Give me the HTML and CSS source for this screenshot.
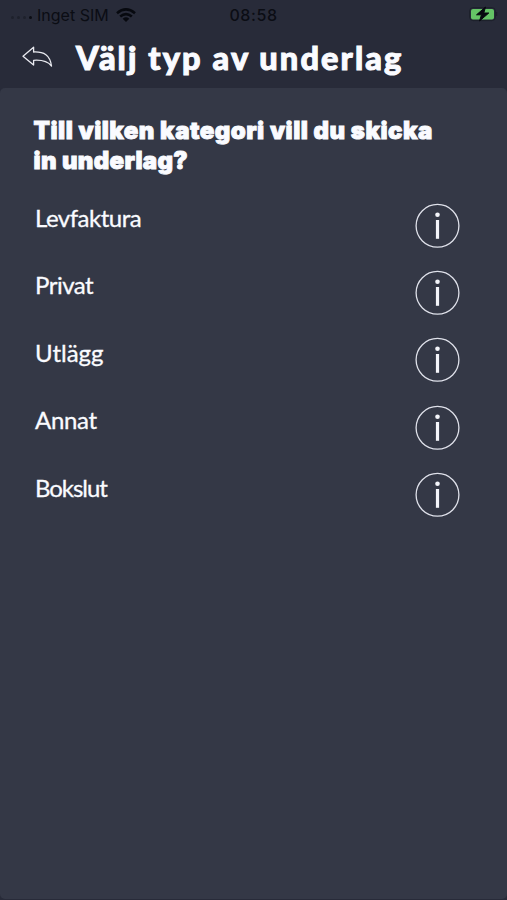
FILE: index.html
```html
<!DOCTYPE html>
<html lang="sv">
<head>
<meta charset="utf-8">
<title>Välj typ av underlag</title>
<link rel="stylesheet" href="styles.css">
</head>
<body>
<div class="status">
  <div class="carrier">
    <span class="dots"><i></i><i></i><i></i><i></i></span>
    <span class="network">Inget SIM</span>
    <svg class="wifi" width="20" height="15" viewBox="0 0 20 15" fill="none" stroke="#07090f" stroke-width="2.6"><path d="M1 5.2Q10-2.4 19 5.2M4.2 8.6Q10 3.6 15.8 8.6"/><path d="M6.7 10.7Q10 7.9 13.3 10.7L10 14Z" fill="#07090f" stroke="none"/></svg>
  </div>
  <span class="clock">08:58</span>
  <svg class="battery" width="29" height="16" viewBox="0 0 29 16"><rect x=".6" y="1.6" width="25.8" height="13" rx="3.5" fill="none" stroke="#1d202b"/><rect x="2" y="3" width="23" height="10.4" rx="2" fill="#65c466"/><path d="M27.5 6v4" stroke="#1d202b" stroke-width="1.5"/><path d="M16.5 1L7.5 8.8h5L10.5 15l9.3-8h-5z" fill="#07090f" stroke="#07090f"/></svg>
</div>
<header class="bar">
  <svg class="back" width="32" height="22" viewBox="0 0 32 22" fill="none" stroke="#e9eaf0" stroke-width="1.3" stroke-linejoin="round"><path d="M1 10.2L11.6 1.2V6C22 5.6 28 9 29.5 20C25.5 14.8 19 13.8 11.6 14.3V19Z"/></svg>
  <h1>Välj typ av underlag</h1>
</header>
<main class="panel">
  <h2>Till vilken kategori vill du skicka<br><span class="second">in underlag?</span></h2>
  <ul class="list">
    <li><span class="snug">Levfaktura</span><svg class="info" viewBox="0 0 46 46"><use href="#info"/></svg></li>
    <li><span class="snug">Privat</span><svg class="info" viewBox="0 0 46 46"><use href="#info"/></svg></li>
    <li><span>Utlägg</span><svg class="info" viewBox="0 0 46 46"><use href="#info"/></svg></li>
    <li><span class="close">Annat</span><svg class="info" viewBox="0 0 46 46"><use href="#info"/></svg></li>
    <li><span class="tight">Bokslut</span><svg class="info" viewBox="0 0 46 46"><use href="#info"/></svg></li>
  </ul>
</main>
<svg class="defs" width="0" height="0"><symbol id="info" viewBox="0 0 46 46"><circle cx="23.5" cy="22.8" r="21.4" fill="none" stroke="#dfe1ea" stroke-width="1.3"/><circle cx="23.5" cy="11.7" r="2.3" fill="#f4f5fa"/><path d="M23.5 17V35.8" stroke="#f4f5fa" stroke-width="3.2"/></symbol></svg>
</body>
</html>
```
FILE: styles.css
```css
* { box-sizing: border-box; }
body {
  margin: 0;
  height: 900px;
  overflow: hidden;
  display: flex;
  flex-direction: column;
  background: #282b39;
  color: #fafbff;
  font-family: Lato, sans-serif;
}
.status {
  height: 30px;
  display: grid;
  grid-template-columns: 1fr auto 1fr;
  align-items: center;
  padding: 0 9px;
  color: #0b0d14;
  font: 16px/30px Inter, sans-serif;
}
.carrier { display: flex; align-items: center; }
.dots { display: flex; gap: 3px; width: 28px; padding: 5px 0 0 2px; }
.dots i { width: 3px; height: 3px; border-radius: 50%; background: #1e212c; }
.dots i:last-child { background: #0b0d14; }
.network { width: 79px; white-space: nowrap; }
.clock { font-weight: 500; letter-spacing: 0.6px; }
.battery { justify-self: end; margin: -2px 0 0; }
.bar {
  height: 58px;
  flex: none;
  display: flex;
  padding-left: 22px;
}
.back { margin-top: 16px; }
h1 {
  margin: 8px 0 0 22px;
  font-size: 32.5px;
  line-height: 40px;
  font-weight: 900;
  letter-spacing: 2.1px;
  -webkit-text-stroke: 1px;
  white-space: nowrap;
}
.panel {
  height: 811px;
  flex: none;
  padding: 28px 47px 0 33px;
  border-radius: 5px;
  background: #343846;
}
h2 {
  margin: 0 0 0 0.6px;
  font: 900 24px/29.5px Inter, sans-serif;
  letter-spacing: 0.47px;
  -webkit-text-stroke: 0.9px;
  white-space: nowrap;
}
.second { letter-spacing: 0.3px; }
.list { margin: 28px 0 0; padding: 0; list-style: none; }
.list li {
  height: 67.4px;
  display: flex;
  justify-content: space-between;
  align-items: flex-start;
  padding-left: 2px;
  font-size: 24px;
  line-height: 30px;
  -webkit-text-stroke: 0.3px;
}
.snug { letter-spacing: -0.5px; }
.close { letter-spacing: -0.3px; }
.tight { letter-spacing: -1.05px; }
.info { width: 46px; height: 46px; margin: -0.4px 0 0; }
.defs { position: absolute; }
```
